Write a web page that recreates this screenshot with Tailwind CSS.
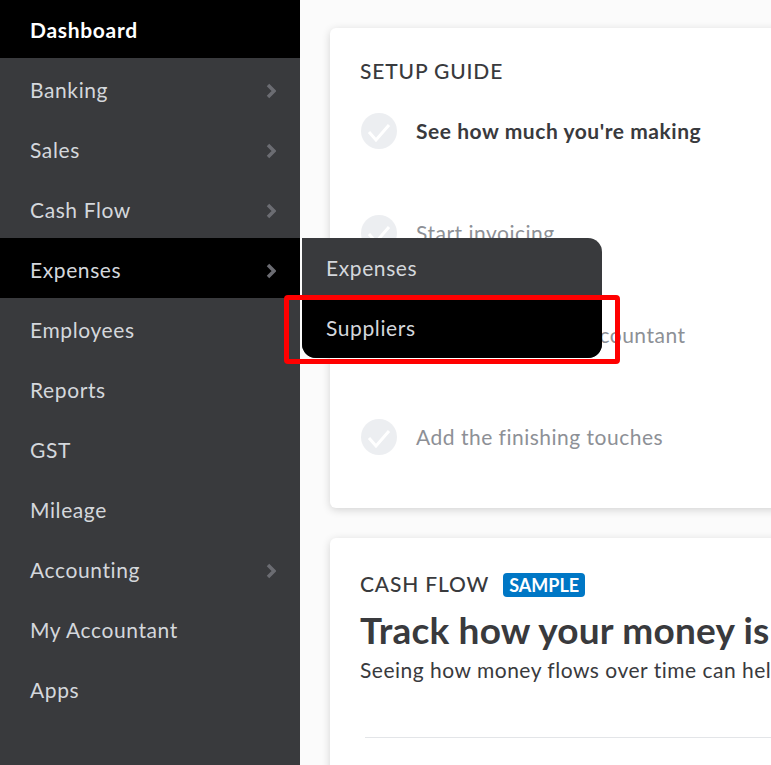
<!DOCTYPE html>
<html lang="en">
<head>
    <meta charset="UTF-8">
    <title>Dashboard</title>
    <script src="https://cdn.jsdelivr.net/npm/@tailwindcss/browser@4"></script>
</head>
<body class="bg-[#fbfbfb] font-['Lato','Noto_Sans',sans-serif]">
    <div class="relative flex w-[771px] h-[765px] overflow-hidden">
        <!-- sidebar -->
        <nav class="w-[300px] h-full shrink-0 bg-[#393a3d] text-[21px] tracking-[0.6px] text-[#d4d7dc]">
            <a class="flex items-center h-[58px] pl-[30px] pt-[2px] bg-black text-white font-bold tracking-[0.7px]">Dashboard</a>
            <a class="flex items-center justify-between h-[60px] pl-[30px] pr-6 pt-[4px]">Banking
                <svg class="w-[10px] h-4 mt-[2px] text-[#6b6c72]" viewBox="0 0 10 16" fill="none" stroke="currentColor" stroke-width="3.5"><path d="M2 2l6 6-6 6"/></svg>
            </a>
            <a class="flex items-center justify-between h-[60px] pl-[30px] pr-6 pt-[4px]">Sales
                <svg class="w-[10px] h-4 mt-[2px] text-[#6b6c72]" viewBox="0 0 10 16" fill="none" stroke="currentColor" stroke-width="3.5"><path d="M2 2l6 6-6 6"/></svg>
            </a>
            <a class="flex items-center justify-between h-[60px] pl-[30px] pr-6 pt-[4px]">Cash Flow
                <svg class="w-[10px] h-4 mt-[2px] text-[#6b6c72]" viewBox="0 0 10 16" fill="none" stroke="currentColor" stroke-width="3.5"><path d="M2 2l6 6-6 6"/></svg>
            </a>
            <a class="flex items-center justify-between h-[60px] pl-[30px] pr-6 pt-[4px] bg-black">Expenses
                <svg class="w-[10px] h-4 mt-[2px] text-[#6b6c72]" viewBox="0 0 10 16" fill="none" stroke="currentColor" stroke-width="3.5"><path d="M2 2l6 6-6 6"/></svg>
            </a>
            <a class="flex items-center h-[60px] pl-[30px] pt-[4px]">Employees</a>
            <a class="flex items-center h-[60px] pl-[30px] pt-[4px]">Reports</a>
            <a class="flex items-center h-[60px] pl-[30px] pt-[4px]">GST</a>
            <a class="flex items-center h-[60px] pl-[30px] pt-[4px]">Mileage</a>
            <a class="flex items-center justify-between h-[60px] pl-[30px] pr-6 pt-[4px]">Accounting
                <svg class="w-[10px] h-4 mt-[2px] text-[#6b6c72]" viewBox="0 0 10 16" fill="none" stroke="currentColor" stroke-width="3.5"><path d="M2 2l6 6-6 6"/></svg>
            </a>
            <a class="flex items-center h-[60px] pl-[30px] pt-[4px]">My Accountant</a>
            <a class="flex items-center h-[60px] pl-[30px] pt-[4px]">Apps</a>
        </nav>

        <!-- main -->
        <main class="flex-1 min-w-0 pl-[30px] pt-7 flex flex-col gap-[30px]">
            <section class="w-[900px] h-[480px] shrink-0 bg-white rounded-l-md shadow-[0_2px_8px_rgba(0,0,0,0.16)] pl-[30px] pt-[29px]">
                <h2 class="text-[21px] leading-7 tracking-[0.85px] font-medium text-[#393a3d]">SETUP GUIDE</h2>
                <div class="flex flex-col gap-[66px] mt-7 text-[21px] tracking-[0.5px] leading-9 text-[#8d9096]">
                    <div class="flex items-center gap-[19px]">
                        <svg class="w-9 h-9 ml-px" viewBox="0 0 36 36"><circle cx="18" cy="18" r="18" fill="#eceef1"/><path d="M8 19l7 8 13-15" fill="none" stroke="#fff" stroke-width="3"/></svg>
                        <span class="font-bold text-[#393a3d] tracking-[0.55px]">See how much you're making</span>
                    </div>
                    <div class="flex items-center gap-[19px]">
                        <svg class="w-9 h-9 ml-px" viewBox="0 0 36 36"><circle cx="18" cy="18" r="18" fill="#eceef1"/><path d="M8 19l7 8 13-15" fill="none" stroke="#fff" stroke-width="3"/></svg>
                        <span>Start invoicing</span>
                    </div>
                    <div class="flex items-center gap-[19px]">
                        <svg class="w-9 h-9 ml-px" viewBox="0 0 36 36"><circle cx="18" cy="18" r="18" fill="#eceef1"/><path d="M8 19l7 8 13-15" fill="none" stroke="#fff" stroke-width="3"/></svg>
                        <span>Connect to your accountant</span>
                    </div>
                    <div class="flex items-center gap-[19px]">
                        <svg class="w-9 h-9 ml-px" viewBox="0 0 36 36"><circle cx="18" cy="18" r="18" fill="#eceef1"/><path d="M8 19l7 8 13-15" fill="none" stroke="#fff" stroke-width="3"/></svg>
                        <span>Add the finishing touches</span>
                    </div>
                </div>
            </section>

            <section class="w-[900px] h-[400px] shrink-0 bg-white rounded-l-md shadow-[0_2px_8px_rgba(0,0,0,0.16)] pl-[30px] pt-[32px] text-[#393a3d] whitespace-nowrap">
                <div class="flex items-center gap-[14px]">
                    <h2 class="text-[21px] leading-7 tracking-[0.85px] font-medium">CASH FLOW</h2>
                    <span class="px-[6px] h-6 mt-0.5 flex items-center rounded bg-[#0077c5] text-white text-lg font-bold">SAMPLE</span>
                </div>
                <h3 class="text-[37px] leading-[44px] tracking-[0.2px] font-bold mt-[10px]">Track how your money is doing</h3>
                <p class="text-[21px] leading-7 tracking-[0.5px] mt-[4px]">Seeing how money flows over time can help you plan ahead</p>
                <div class="h-px bg-[#e3e5e8] ml-[5px] mt-[53px]"></div>
            </section>
        </main>

        <!-- flyout -->
        <div class="absolute left-[302px] top-[238px] w-[300px] rounded-r-[14px] rounded-bl-[14px] overflow-hidden bg-[#393a3d] text-[21px] tracking-[0.6px] text-[#d4d7dc]">
            <a class="flex items-center h-[60px] pl-6">Expenses</a>
            <a class="flex items-center h-[60px] pl-6 bg-black">Suppliers</a>
        </div>
        <!-- highlight -->
        <div class="absolute left-[284px] top-[295px] w-[336px] h-[69px] border-[5px] border-[#ff0000] rounded-sm"></div>
    </div>
</body>
</html>
